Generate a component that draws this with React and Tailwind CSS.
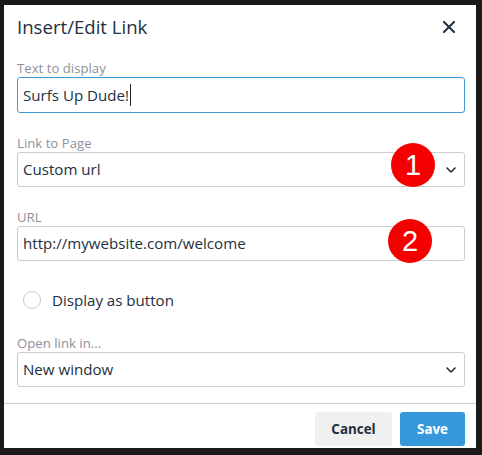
import React from "react";

const font = { fontFamily: '"Open Sans", "Noto Sans", "Liberation Sans", sans-serif' };

function Chevron() {
  return (
    <svg width="10" height="6" viewBox="0 0 10 6" className="absolute right-[8px] top-1/2 -translate-y-1/2">
      <path d="M1 1 L5 5 L9 1" fill="none" stroke="#222f3e" strokeWidth="1.6" strokeLinecap="round" strokeLinejoin="round" />
    </svg>
  );
}

function Badge({ n, className }) {
  return (
    <div
      className={"absolute w-[44px] h-[44px] rounded-full bg-[#f50000] text-white flex items-center justify-center text-[29px] leading-none " + className}
      style={{ fontFamily: '"Liberation Sans", Arial, sans-serif' }}
    >
      {n}
    </div>
  );
}

export default function App() {
  return (
    <div className="w-[482px] h-[455px] bg-[#1b1b1b] pt-[5px] pl-[4px] overflow-hidden" style={font}>
      <div className="relative w-[472px] h-[443px] bg-white flex flex-col">
        {/* header */}
        <div className="flex justify-between pl-[13px] pr-[21px] pt-[8px] h-[54px] items-start">
          <div className="text-[18.6px] leading-[28px] text-[#222f3e]">Insert/Edit Link</div>
          <svg width="12" height="12" viewBox="0 0 12 12" className="mt-[8px]">
            <path d="M1 1 L11 11 M11 1 L1 11" stroke="#222f3e" strokeWidth="2" strokeLinecap="square" />
          </svg>
        </div>

        <div className="pl-[13px] pr-[11px] flex flex-col">
          <label className="text-[13.2px] leading-[18px] text-[#8d9299]">Text to display</label>
          <div className="h-[36px] border border-[#3f98d8] rounded-[3px] flex items-center px-[5px] text-[15.1px] text-[#222f3e]">
            <span>Surfs Up Dude!</span>
            <span className="inline-block w-px h-[22px] bg-[#222] ml-[1px]"></span>
          </div>

          <label className="mt-[21px] text-[13.2px] leading-[18px] text-[#8d9299]">Link to Page</label>
          <div className="relative h-[35px] border border-[#cccccc] rounded-[3px] flex items-center px-[5px] text-[15.1px] text-[#222f3e]">
            <span>Custom url</span>
            <Chevron />
          </div>

          <label className="mt-[21px] text-[13.2px] leading-[18px] text-[#8d9299]">URL</label>
          <div className="h-[35px] border border-[#cccccc] rounded-[3px] flex items-center px-[5px] text-[15.1px] text-[#222f3e]">
            <span>http://mywebsite.com/welcome</span>
          </div>

          <div className="mt-[27px] h-[24px] flex items-center">
            <span className="ml-[6px] w-[18px] h-[18px] rounded-full border border-[#c8c8c8] bg-white"></span>
            <span className="ml-[11px] text-[15.1px] text-[#222f3e]">Display as button</span>
          </div>

          <label className="mt-[22px] text-[13.2px] leading-[18px] text-[#8d9299]">Open link in...</label>
          <div className="relative h-[35px] border border-[#cccccc] rounded-[3px] flex items-center px-[5px] text-[15.1px] text-[#222f3e]">
            <span>New window</span>
            <Chevron />
          </div>
        </div>

        <div className="mt-[16px] border-t border-[#cccccc] flex justify-end gap-[8px] pr-[11px] pt-[8px]">
          <button className="w-[77px] h-[34px] rounded-[3px] bg-[#f0f0f0] text-[#222f3e] text-[13.4px] font-bold">Cancel</button>
          <button className="w-[65px] h-[34px] rounded-[3px] bg-[#3598db] text-white text-[13.4px] font-bold">Save</button>
        </div>

        <Badge n="1" className="left-[387px] top-[138px]" />
        <Badge n="2" className="left-[384px] top-[214px]" />
      </div>
    </div>
  );
}
